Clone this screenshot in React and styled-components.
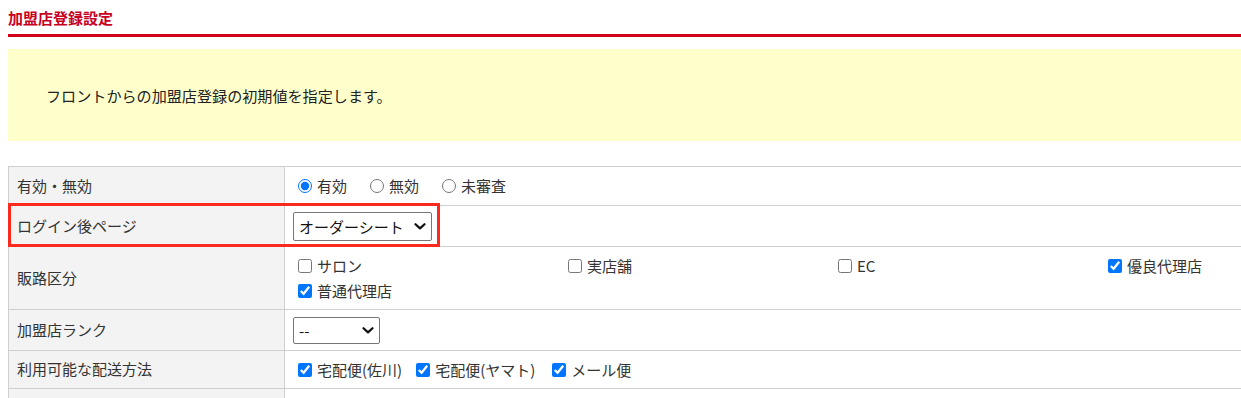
import React from "react";
import styled, { createGlobalStyle } from "styled-components";

const Global = createGlobalStyle`
  html {
    overflow: hidden;
  }
  body {
    margin: 8px 0 8px 8px;
    font-family: "Noto Sans CJK JP", "Noto Sans", sans-serif;
    font-size: 15px;
    color: #333;
    background: #fff;
  }
`;

const Page = styled.div`
  width: 1400px;
`;

const Title = styled.h1`
  margin: 0;
  font-size: 15px;
  line-height: 20px;
  font-weight: bold;
  color: #c8001e;
  padding-bottom: 6px;
  border-bottom: 3px solid #d0021b;
`;

const Notice = styled.div`
  margin-top: 12px;
  height: 92px;
  background: #ffffcc;
  display: flex;
  align-items: center;
  padding-left: 38px;
  font-size: 15.1px;
  color: #222;
`;

const TableWrap = styled.div`
  position: relative;
  margin-top: 25px;
`;

const Table = styled.table`
  width: 100%;
  border-collapse: collapse;
  border-top: 1px solid #cfcfcf;
  border-left: 1px solid #cfcfcf;
`;

const Row = styled.tr`
  height: ${(p) => p.$h}px;
`;

const Label = styled.th`
  width: 276px;
  box-sizing: border-box;
  text-align: left;
  font-weight: normal;
  background: #f2f3f2;
  padding: 0 8px 2px;
  border-bottom: 1px solid #cfcfcf;
  border-right: 1px solid #cfcfcf;
  vertical-align: middle;
  font-size: 15px;
`;

const Value = styled.td`
  padding: 0 8px;
  border-bottom: 1px solid #cfcfcf;
  vertical-align: middle;
  font-size: 15px;
`;

const Choice = styled.label`
  display: inline-flex;
  align-items: center;
  margin-right: ${(p) => p.$gap ?? 16}px;
  line-height: 24px;
  white-space: nowrap;
  input {
    margin: 0 5px 0 5px;
    width: 14px;
    height: 14px;
  }
`;

const CheckGrid = styled.div`
  display: grid;
  grid-template-columns: repeat(4, 270px);
  row-gap: 1px;
`;

const SelectBox = styled.span`
  position: relative;
  display: inline-block;
  vertical-align: middle;
`;

const Select = styled.select`
  appearance: none;
  display: block;
  box-sizing: border-box;
  width: ${(p) => p.$w}px;
  height: ${(p) => p.$hh}px;
  font-family: "Noto Sans CJK JP", sans-serif;
  font-size: 15px;
  color: #111;
  border: 1px solid #767676;
  border-radius: 2px;
  background: #fff;
  padding: 0 24px 0 5px;
  outline: none;
`;

const Chevron = styled.svg`
  position: absolute;
  right: 6px;
  top: 50%;
  margin-top: -3px;
  pointer-events: none;
`;

const Highlight = styled.div`
  position: absolute;
  left: 0;
  top: 37px;
  width: 432px;
  height: 44px;
  box-sizing: border-box;
  border: 3px solid #fb2a1e;
  pointer-events: none;
`;

const kinds = [
  { name: "サロン", on: false },
  { name: "実店舗", on: false },
  { name: "EC", on: false },
  { name: "優良代理店", on: true },
  { name: "普通代理店", on: true },
];

function Dropdown({ w, h, value, children }) {
  return (
    <SelectBox>
      <Select $w={w} $hh={h} defaultValue={value}>
        {children}
      </Select>
      <Chevron width="12" height="7" viewBox="0 0 12 7">
        <path d="M1.5 1.2 L6 5.4 L10.5 1.2" fill="none" stroke="#111" strokeWidth="2.2" strokeLinecap="round" strokeLinejoin="round" />
      </Chevron>
    </SelectBox>
  );
}

export default function App() {
  return (
    <Page>
      <Global />
      <Title>加盟店登録設定</Title>
      <Notice>フロントからの加盟店登録の初期値を指定します。</Notice>
      <TableWrap>
        <Table>
          <tbody>
            <Row $h={39}>
              <Label>有効・無効</Label>
              <Value>
                <Choice $gap={18}>
                  <input type="radio" name="state" defaultChecked />有効
                </Choice>
                <Choice $gap={18}>
                  <input type="radio" name="state" />無効
                </Choice>
                <Choice>
                  <input type="radio" name="state" />未審査
                </Choice>
              </Value>
            </Row>
            <Row $h={41}>
              <Label>ログイン後ページ</Label>
              <Value>
                <Dropdown w={139} h={29} value="order">
                  <option value="order">オーダーシート</option>
                </Dropdown>
              </Value>
            </Row>
            <Row $h={63}>
              <Label>販路区分</Label>
              <Value>
                <CheckGrid>
                  {kinds.map((k) => (
                    <Choice key={k.name}>
                      <input type="checkbox" defaultChecked={k.on} />
                      {k.name}
                    </Choice>
                  ))}
                </CheckGrid>
              </Value>
            </Row>
            <Row $h={41}>
              <Label>加盟店ランク</Label>
              <Value>
                <Dropdown w={87} h={27} value="">
                  <option value="">--</option>
                </Dropdown>
              </Value>
            </Row>
            <Row $h={38}>
              <Label>利用可能な配送方法</Label>
              <Value>
                <Choice $gap={9}>
                  <input type="checkbox" defaultChecked />宅配便(佐川)
                </Choice>
                <Choice $gap={12}>
                  <input type="checkbox" defaultChecked />宅配便(ヤマト)
                </Choice>
                <Choice>
                  <input type="checkbox" defaultChecked />メール便
                </Choice>
              </Value>
            </Row>
            <Row $h={40}>
              <Label></Label>
              <Value></Value>
            </Row>
          </tbody>
        </Table>
        <Highlight />
      </TableWrap>
    </Page>
  );
}
